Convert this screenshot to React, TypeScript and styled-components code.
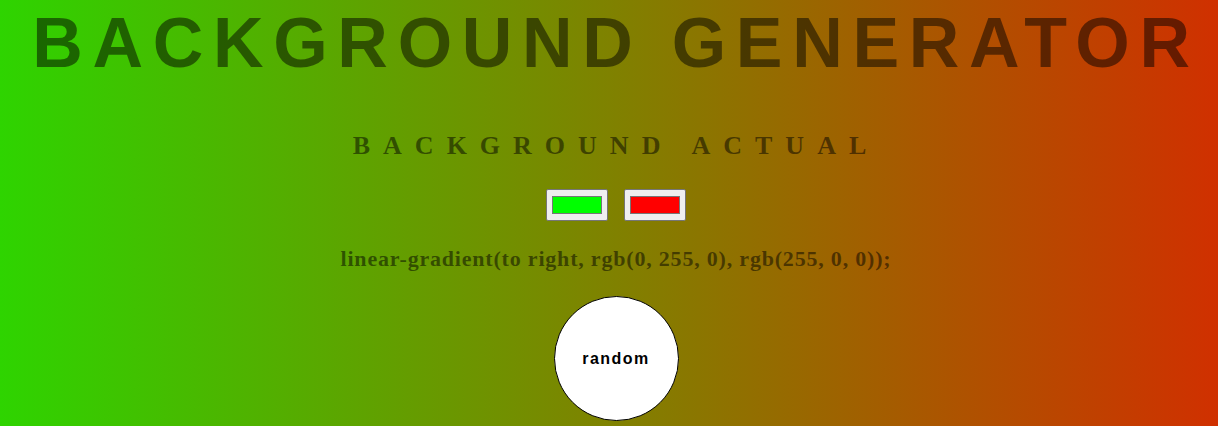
import React from "react";
import styled, { createGlobalStyle } from "styled-components";

const Global = createGlobalStyle`
  html, body { margin: 0; padding: 0; }
  body {
    background: linear-gradient(to right, rgb(46, 212, 0), rgb(208, 48, 0));
    min-height: 426px;
    overflow: hidden;
    font-family: "Liberation Serif", "Times New Roman", serif;
    color: rgba(0, 0, 0, 0.5);
    text-align: center;
  }
`;

const Page = styled.div`
  display: flex;
  flex-direction: column;
  align-items: center;
  width: 100%;
  margin-left: 7px;
  min-height: 426px;
`;

const Title = styled.h1`
  margin: 0;
  padding-top: 3px;
  font: bold 70px/80px "Liberation Sans", Arial, sans-serif;
  letter-spacing: 9.7px;
  text-transform: uppercase;
  color: rgba(0, 0, 0, 0.5);
`;

const Subtitle = styled.h3`
  margin: 48px 0 0;
  font: bold 26px/30px "Liberation Serif", "Times New Roman", serif;
  letter-spacing: 0.5em;
  color: rgba(0, 0, 0, 0.5);
`;

const Pickers = styled.div`
  display: flex;
  gap: 16px;
  margin-top: 28px;
`;

const ColorInput = styled.input`
  width: 62px;
  height: 32px;
  padding: 6px 5px;
  margin: 0;
  box-sizing: border-box;
  border: 1px solid #767676;
  border-radius: 2px;
  background: #efefef;
  cursor: pointer;
  &::-webkit-color-swatch-wrapper { padding: 0; }
  &::-webkit-color-swatch { border: 1px solid #777; border-radius: 0; }
`;

const Code = styled.h3`
  margin: 25px 0 0;
  font: bold 22px/26px "Liberation Serif", "Times New Roman", serif;
  letter-spacing: 0.8px;
  color: rgba(0, 0, 0, 0.5);
`;

const RandomButton = styled.button`
  margin-top: 24px;
  width: 125px;
  height: 125px;
  padding: 0;
  border-radius: 50%;
  border: 1px solid #000;
  background: #fff;
  font: bold 16px "Liberation Sans", Arial, sans-serif;
  letter-spacing: 1.5px;
  color: #000;
  cursor: pointer;
`;

export default function App() {
  return (
    <>
      <Global />
      <Page>
        <Title>Background Generator</Title>
        <Subtitle>BACKGROUND ACTUAL</Subtitle>
        <Pickers>
          <ColorInput type="color" defaultValue="#00ff00" />
          <ColorInput type="color" defaultValue="#ff0000" />
        </Pickers>
        <Code>linear-gradient(to right, rgb(0, 255, 0), rgb(255, 0, 0));</Code>
        <RandomButton>random</RandomButton>
      </Page>
    </>
  );
}
